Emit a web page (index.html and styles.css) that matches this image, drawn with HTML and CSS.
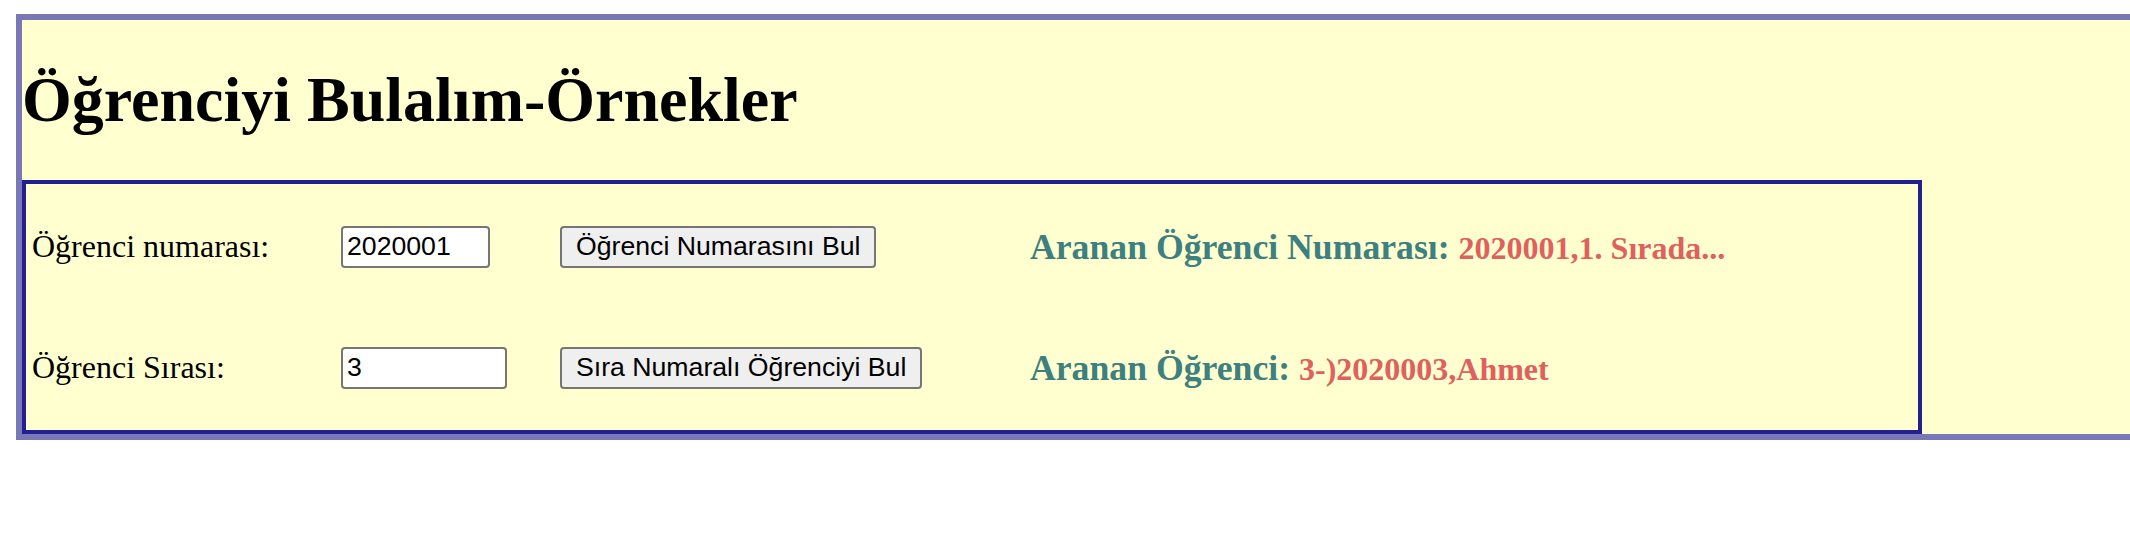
FILE: index.html
```html
<!DOCTYPE html>
<html lang="tr">
<head>
<meta charset="utf-8">
<title>Öğrenciyi Bulalım-Örnekler</title>
<link rel="stylesheet" href="styles.css">
</head>
<body>
<div class="page">
  <h1 class="title">Öğrenciyi Bulalım-Örnekler</h1>
  <div class="panel">
    <div class="row">
      <label class="label" for="num">Öğrenci numarası:</label>
      <div class="cell"><input id="num" class="field field-num" type="text" value="2020001"></div>
      <div class="cell"><button class="btn" type="button">Öğrenci Numarasını Bul</button></div>
      <div class="result"><span class="result-key">Aranan Öğrenci Numarası: </span><span class="result-val">2020001,1. Sırada...</span></div>
    </div>
    <div class="row">
      <label class="label" for="sira">Öğrenci Sırası:</label>
      <div class="cell"><input id="sira" class="field field-sira" type="text" value="3"></div>
      <div class="cell"><button class="btn" type="button">Sıra Numaralı Öğrenciyi Bul</button></div>
      <div class="result"><span class="result-key">Aranan Öğrenci: </span><span class="result-val">3-)2020003,Ahmet</span></div>
    </div>
  </div>
</div>
</body>
</html>
```
FILE: styles.css
```css
html {
  background: #ffffff;
}

body {
  margin: 14px 0 0 16px;
  font-family: "Liberation Serif", "Times New Roman", serif;
  font-size: 32px;
  color: #000000;
}

.page {
  background: #ffffd0;
  border: 6px solid #7878b6;
  border-right: 0;
}

.title {
  margin: 43px 0;
  font-size: 64px;
  font-weight: bold;
  line-height: normal;
}

.panel {
  box-sizing: border-box;
  width: 1900px;
  border: 4px solid #211f91;
  padding: 2px 0 2px 6px;
}

.row {
  display: grid;
  grid-template-columns: 309px 219px 470px 1fr;
  align-items: center;
  height: 121px;
}

.label {
  font-size: 32px;
}

.cell {
  display: flex;
  align-items: center;
}

.field {
  box-sizing: border-box;
  height: 42px;
  margin: 0;
  padding: 2px 4px;
  border: 2px solid #767676;
  border-radius: 4px;
  background: #ffffff;
  font-family: "Liberation Sans", Arial, sans-serif;
  font-size: 26.67px;
  color: #000000;
}

.field-num {
  width: 149px;
}

.field-sira {
  width: 166px;
}

.btn {
  box-sizing: border-box;
  height: 42px;
  margin: 0;
  padding: 2px 14px;
  border: 2px solid #767676;
  border-radius: 4px;
  background: #efefef;
  font-family: "Liberation Sans", Arial, sans-serif;
  font-size: 26.67px;
  color: #000000;
}

.result {
  font-weight: bold;
  line-height: normal;
}

.result-key {
  font-size: 35.7px;
  color: #3d8080;
}

.result-val {
  font-size: 32px;
  color: #e0605e;
}
```
